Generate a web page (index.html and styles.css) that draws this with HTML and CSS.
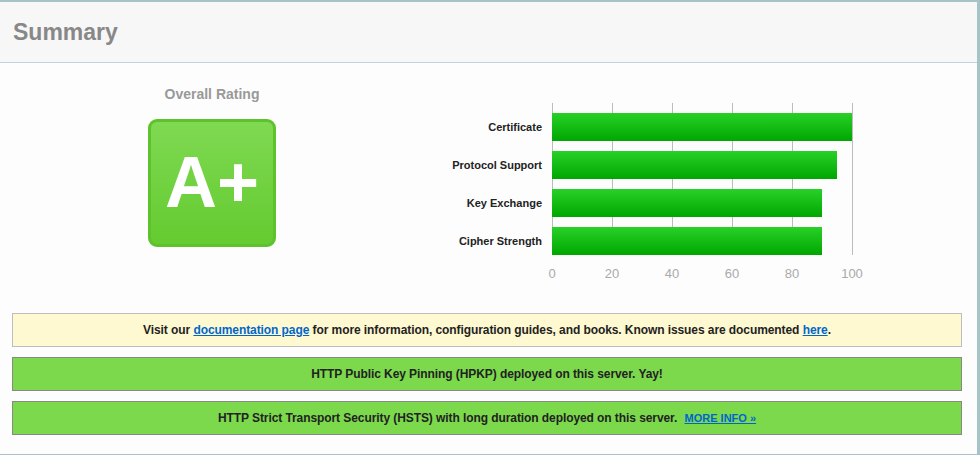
FILE: index.html
```html
<!DOCTYPE html>
<html>
<head>
<meta charset="utf-8">
<title>Summary</title>
<link rel="stylesheet" href="styles.css">
</head>
<body>
<div class="panel">
  <div class="header">Summary</div>
  <div class="content">
    <div class="rating-row">
      <div class="overall">
        <div class="overall-title">Overall Rating</div>
        <div class="grade">A+</div>
      </div>
      <div class="chart">
        <div class="chart-body">
          <div class="labels">
            <div class="label">Certificate</div>
            <div class="label">Protocol Support</div>
            <div class="label">Key Exchange</div>
            <div class="label">Cipher Strength</div>
          </div>
          <div class="plot-wrap">
            <div class="plot">
              <span class="gridline" style="left:0px"></span>
              <span class="gridline" style="left:60px"></span>
              <span class="gridline" style="left:120px"></span>
              <span class="gridline" style="left:180px"></span>
              <span class="gridline" style="left:240px"></span>
              <span class="gridline" style="left:300px"></span>
              <div class="bar" style="width:300px"></div>
              <div class="bar" style="width:285px"></div>
              <div class="bar" style="width:270px"></div>
              <div class="bar" style="width:270px"></div>
            </div>
            <div class="axis">
              <span class="tick" style="left:0px">0</span>
              <span class="tick" style="left:60px">20</span>
              <span class="tick" style="left:120px">40</span>
              <span class="tick" style="left:180px">60</span>
              <span class="tick" style="left:240px">80</span>
              <span class="tick" style="left:300px">100</span>
            </div>
          </div>
        </div>
      </div>
    </div>
    <div class="boxes">
      <div class="box box-info">Visit our <a href="#">documentation page</a> for more information, configuration guides, and books. Known issues are documented <a href="#">here</a>.</div>
      <div class="box box-good">HTTP Public Key Pinning (HPKP) deployed on this server. Yay!</div>
      <div class="box box-good">HTTP Strict Transport Security (HSTS) with long duration deployed on this server. <a class="more" href="#">MORE INFO »</a></div>
    </div>
  </div>
</div>
</body>
</html>
```

FILE: styles.css
```css
html, body {
  margin: 0;
  padding: 0;
}
body {
  background: #a6c4c7;
  font-family: "Liberation Sans", Arial, sans-serif;
  overflow: hidden;
}
.panel {
  margin-top: 2px;
  width: 977px;
  height: 452px;
  background: #fdfdfd;
  box-sizing: border-box;
}
.header {
  height: 60px;
  background: #f7f7f7;
  border-bottom: 1px solid #c7d1d9;
  display: flex;
  align-items: center;
  padding-left: 13px;
  font-size: 23px;
  font-weight: bold;
  color: #888;
}
.content {
  display: flex;
  flex-direction: column;
}
.rating-row {
  display: flex;
  height: 217px;
}
.overall {
  width: 424px;
  display: flex;
  flex-direction: column;
  align-items: center;
  padding-top: 23px;
}
.overall-title {
  font-size: 14px;
  line-height: 17px;
  font-weight: bold;
  color: #999;
}
.grade {
  margin-top: 16px;
  width: 128px;
  height: 128px;
  box-sizing: border-box;
  border: 3px solid #5ec22d;
  border-radius: 9px;
  background: linear-gradient(#7fd952, #64cb30);
  color: #fff;
  font-size: 72px;
  font-weight: bold;
  display: flex;
  align-items: center;
  justify-content: center;
  line-height: 1;
  padding-bottom: 2px;
}
.chart {
  padding-top: 40px;
}
.chart-body {
  display: flex;
}
.labels {
  width: 118px;
  padding-right: 10px;
  padding-top: 10px;
  display: flex;
  flex-direction: column;
  gap: 10px;
}
.label {
  height: 28px;
  line-height: 28px;
  text-align: right;
  font-size: 11px;
  font-weight: bold;
  color: #222;
  white-space: nowrap;
}
.plot-wrap {
  width: 300px;
}
.plot {
  position: relative;
  height: 152px;
  box-sizing: border-box;
  padding-top: 10px;
  display: flex;
  flex-direction: column;
  gap: 10px;
}
.gridline {
  position: absolute;
  top: 0;
  bottom: 0;
  width: 1px;
  background: #bcbcbc;
}
.bar {
  position: relative;
  height: 28px;
  background: linear-gradient(#28d028, #00a700);
}
.axis {
  position: relative;
  height: 15px;
  margin-top: 11px;
}
.tick {
  position: absolute;
  top: 0;
  transform: translateX(-50%);
  font-size: 13px;
  line-height: 15px;
  color: #aaa;
}
.boxes {
  margin: 33px 15px 0 12px;
  display: flex;
  flex-direction: column;
  gap: 10px;
}
.box {
  height: 34px;
  box-sizing: border-box;
  line-height: 32px;
  text-align: center;
  font-size: 12px;
  font-weight: bold;
  color: #222;
  letter-spacing: -0.08px;
}
.box a {
  color: #0066cc;
  text-decoration: underline;
}
.box-info {
  background: #fff9d2;
  border: 1px solid #bdbdbd;
}
.box-good {
  background: #7cd94c;
  border: 1px solid #888;
}
.more {
  font-size: 11px;
  margin-left: 4px;
  letter-spacing: 0;
}
```
